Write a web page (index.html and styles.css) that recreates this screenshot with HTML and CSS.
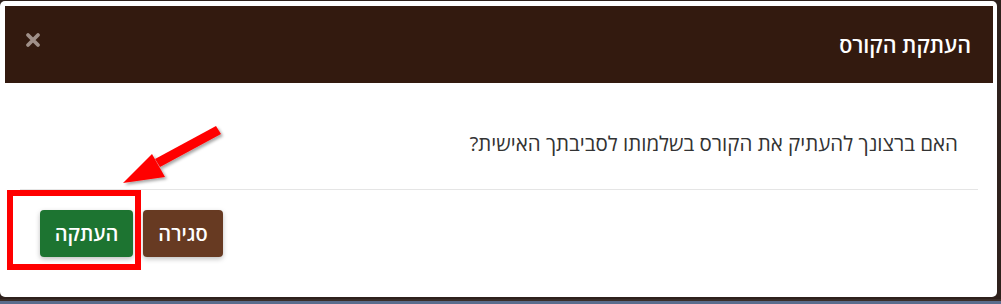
FILE: index.html
```html
<!DOCTYPE html>
<html lang="he" dir="rtl">
<head>
<meta charset="utf-8">
<link rel="stylesheet" href="styles.css">
</head>
<body>
<div class="stage">
  <div class="modal">
    <div class="modal-header">
      <h4 class="modal-title">העתקת הקורס</h4>
      <button class="close" aria-label="סגור">
        <svg width="16" height="16" viewBox="0 0 16 16"><path d="M3 3 L13 13 M13 3 L3 13" stroke="#a09089" stroke-width="3.8" stroke-linecap="round"/></svg>
      </button>
    </div>
    <div class="modal-body">
      <p>האם ברצונך להעתיק את הקורס בשלמותו לסביבתך האישית?</p>
    </div>
    <div class="modal-footer">
      <button class="btn btn-brown">סגירה</button>
      <button class="btn btn-green">העתקה</button>
    </div>
  </div>
  <div class="bottom-strip"></div>
  <div class="highlight"></div>
  <svg class="arrow" width="240" height="200" viewBox="0 0 240 200">
    <defs>
      <filter id="sh" x="-20%" y="-20%" width="140%" height="140%">
        <feDropShadow dx="2" dy="2" stdDeviation="1.5" flood-color="#000" flood-opacity="0.35"/>
      </filter>
    </defs>
    <g filter="url(#sh)" fill="#ff0000">
      <polygon points="216,126 221,134 160,167 155,159"/>
      <polygon points="123,183 152,154 165,177"/>
    </g>
  </svg>
</div>
</body>
</html>
```
FILE: styles.css
```css
html, body {
  margin: 0;
  padding: 0;
}
body {
  width: 1001px;
  height: 304px;
  overflow: hidden;
  background: #2e211c;
  font-family: "Open Sans", "Liberation Sans", Arial, sans-serif;
}
.stage {
  position: relative;
  width: 1001px;
  height: 304px;
  display: flex;
  flex-direction: column;
}
.modal {
  margin-top: 1px;
  width: 988px;
  height: 291px;
  margin-right: 4px;
  background: #ffffff;
  border-radius: 5px;
  padding: 5px 4px 0 5px;
  display: flex;
  flex-direction: column;
}
.modal-header {
  height: 77px;
  background: #331a0f;
  display: flex;
  flex-direction: row;
  align-items: center;
  justify-content: space-between;
  padding: 0 22px 0 20px;
  box-sizing: border-box;
}
.modal-title {
  margin: 0;
  color: #ffffff;
  font-size: 21.5px;
  font-weight: 600;
  line-height: 28px;
}
.close {
  align-self: flex-start;
  margin-top: 26px;
  background: none;
  border: 0;
  padding: 0;
  width: 16px;
  height: 16px;
  display: block;
  cursor: pointer;
}
.close svg { display: block; }
.modal-body {
  padding: 47px 35px 33px 35px;
  border-bottom: 1px solid #e5e5e5;
  margin: 0 15px;
  padding-right: 20px;
}
.modal-body p {
  margin: 0;
  font-size: 20.5px;
  line-height: 26px;
  color: #333333;
}
.modal-footer {
  display: flex;
  flex-direction: row;
  justify-content: flex-end;
  gap: 10px;
  padding: 20px 35px 0 35px;
}
.btn {
  height: 47px;
  border: 0;
  border-radius: 4px;
  color: #ffffff;
  font-family: "Open Sans", "Liberation Sans", Arial, sans-serif;
  font-size: 20px;
  font-weight: 600;
  box-shadow: 0 2px 5px rgba(0, 0, 0, 0.25);
  cursor: pointer;
  padding: 0;
}
.btn-brown {
  width: 80px;
  background: #673a22;
}
.btn-green {
  width: 93px;
  background: #1d7431;
}
.bottom-strip {
  margin-top: 2px;
  flex: 1;
  background: #5a6d8d;
  border-top: 2px solid #3b2e29;
}
.highlight {
  position: absolute;
  left: 7px;
  top: 190px;
  width: 122px;
  height: 68px;
  border: 6px solid #ff0000;
}
.arrow {
  position: absolute;
  left: 0;
  top: 0;
}
```
